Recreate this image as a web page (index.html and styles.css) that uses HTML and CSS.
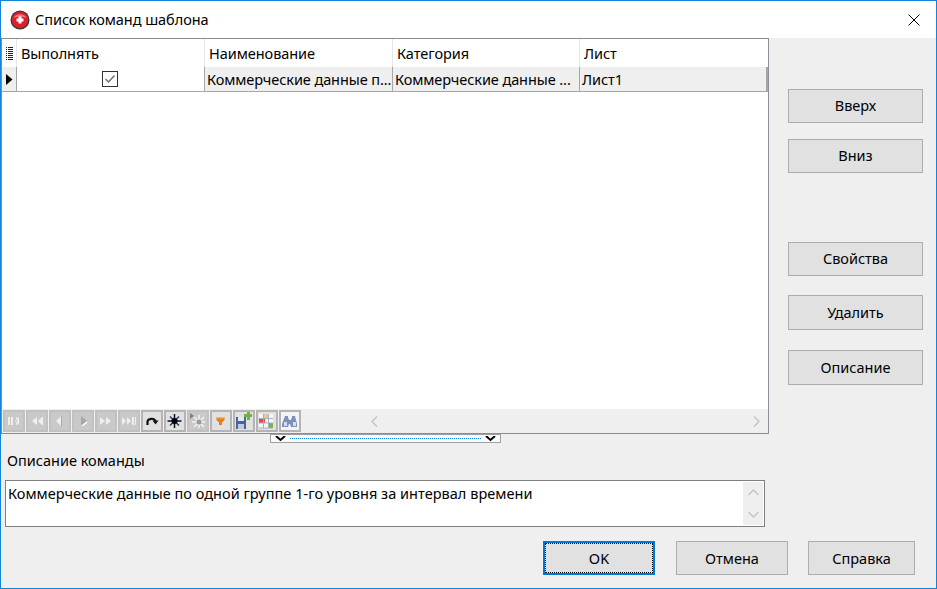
FILE: index.html
```html
<!DOCTYPE html>
<html lang="ru">
<head>
<meta charset="utf-8">
<title>Список команд шаблона</title>
<link rel="stylesheet" href="styles.css">
</head>
<body>
<div class="window">
  <header class="titlebar">
    <svg class="app-icon" width="20" height="20" viewBox="0 0 20 20"><circle cx="10" cy="10" r="9.500" fill="#3a3a3a"/><circle cx="10" cy="10" r="8.200" fill="#dd1f2b"/><path d="M3.500 8a7 6 0 0 1 13 0a9 4 0 0 0-13 0z" fill="#f0757c"/><path d="M8.500 6.500h3V8.500h2v3h-2v2h-3v-2h-2v-3h2z" fill="#fff"/></svg>
    <span class="title">Список команд шаблона</span>
    <svg class="close" width="12" height="12" viewBox="0 0 12 12"><path d="M.5.500l11 11M11.500.500l-11 11" stroke="#000" stroke-width="1" fill="none"/></svg>
  </header>
  <div class="content">
    <div class="left">
      <section class="grid">
        <div class="row head">
          <div class="cell ind">
            <svg width="9" height="16" viewBox="0 0 9 16"><path d="M1 2.500h1M3 2.500h5M1 4.500h1M3 4.500h5M1 6.500h1M3 6.500h5M1 8.500h1M3 8.500h5M1 10.500h1M3 10.500h5M1 12.500h1M3 12.500h5M1 14.500h1M3 14.500h5" stroke="#222" fill="none"/></svg>
          </div>
          <div class="cell">Выполнять</div>
          <div class="cell">Наименование</div>
          <div class="cell c3">Категория</div>
          <div class="cell c4">Лист</div>
        </div>
        <div class="row data">
          <div class="cell ind">
            <svg width="7" height="11" viewBox="0 0 7 11"><path d="M0 0l6.500 5.500L0 11z" fill="#000"/></svg>
          </div>
          <div class="cell chk">
            <svg width="16" height="16" viewBox="0 0 16 16"><rect x=".5" y=".5" width="15" height="15" fill="#fff" stroke="#333"/><path d="M3.500 8l3 3 6-6.500" fill="none" stroke="#6a6a6a" stroke-width="1.300"/></svg>
          </div>
          <div class="cell txt">Коммерческие данные п...</div>
          <div class="cell txt">Коммерческие данные ...</div>
          <div class="cell txt">Лист1</div>
        </div>
        <div class="grid-space"></div>
        <div class="nav">
          <button class="nb off"><svg width="20" height="20" viewBox="0 0 20 20"><path d="M4 6h2v8H4zM7 6h2v8H7zM15 6v8l-4-4zM13 6h-1v8h1z" fill="#efefef"/></svg></button>
          <button class="nb off"><svg width="20" height="20" viewBox="0 0 20 20"><path d="M10 6v8L5 10zM15 6v8l-4-4zM15 6h1v8h-1z" fill="#efefef"/></svg></button>
          <button class="nb off"><svg width="20" height="20" viewBox="0 0 20 20"><path d="M11 5v10l-5-5z" fill="#efefef"/><path d="M11 5h1v10h-1z" fill="#a8a8a8"/></svg></button>
          <button class="nb off"><svg width="20" height="20" viewBox="0 0 20 20"><path d="M8 5v10l6-5z" fill="#a8a8a8"/><path d="M8 15l6-5v2l-4 3z" fill="#fff"/></svg></button>
          <button class="nb off"><svg width="20" height="20" viewBox="0 0 20 20"><path d="M4 6v8l5-4zM10 6v8l5-4z" fill="#efefef"/></svg></button>
          <button class="nb off"><svg width="20" height="20" viewBox="0 0 20 20"><path d="M3 6v8l4-4zM8 6v8l4-4zM13 6h2v8h-2zM16 6h1v8h-1z" fill="#efefef"/></svg></button>
          <button class="nb"><svg width="20" height="20" viewBox="0 0 20 20"><path d="M5.500 14v-3.500C6 7.500 12 6.500 13.500 10" fill="none" stroke="#111" stroke-width="2.200"/><path d="M10.500 9.500h6l-3 4z" fill="#111"/></svg></button>
          <button class="nb"><svg width="20" height="20" viewBox="0 0 20 20"><path d="M9.500 3v14M2.500 10h14" stroke="#111" stroke-width="1.500"/><path d="M5 5.500l9 9M14 5.500l-9 9" stroke="#223a80" stroke-width="1.500"/><circle cx="9.500" cy="10" r="3" fill="#000"/></svg></button>
          <button class="nb off"><svg width="20" height="20" viewBox="0 0 20 20"><path d="M2 2l4 3-4 3z" fill="#808080"/><path d="M11 4v13M4 11h13M6 6l10 10M16 6L6 16" stroke="#f4f4f4" stroke-width="1.500"/><circle cx="11" cy="11" r="2.500" fill="#9a9a9a"/></svg></button>
          <button class="nb"><svg width="20" height="20" viewBox="0 0 20 20"><path d="M5.500 6h8v3l-2.500 2.500V14h-3v-2.500L5.500 9z" fill="#f07c10"/><path d="M5.500 6h8v1.500h-8z" fill="#ffae4a"/></svg></button>
          <button class="nb"><svg width="20" height="20" viewBox="0 0 20 20"><path d="M2 6h10v12H2z" fill="#4a6494"/><path d="M4 6h6v4H4z" fill="#e4e9f4"/><path d="M4 13h6v5H4z" fill="#bfcbe2"/><path d="M10 3h3V0.500h3V3h2v3h-2v3h-3V6h-3z" fill="#6eb04e"/></svg></button>
          <button class="nb"><svg width="20" height="20" viewBox="0 0 20 20"><path d="M2 3h14v14H2z" fill="#f6f6fa"/><path d="M6 3h5v5H6z" fill="#f6c27c"/><path d="M2 8h6v4H2z" fill="#ef4a40"/><path d="M11 12h5v5h-5z" fill="#7fb23a"/><path d="M2 17h14M2 12h14M2 7.500h14M6.500 3v14M11.500 3v14" stroke="#a3aecb" fill="none"/></svg></button>
          <button class="nb"><svg width="20" height="20" viewBox="0 0 20 20"><rect x="0" y="0" width="20" height="20" fill="#f3f3f6"/><path d="M5 5h3v2l1 1v1h2V8l1-1V5h3l2 8v3h-6l-1-3H9l-1 3H2v-3z" fill="#7d90bb"/><path d="M4 11h3v4H4zM13 11h3v4h-3z" fill="#d5dcec"/></svg></button>
          <div class="hscroll">
            <svg width="7" height="11" viewBox="0 0 7 11"><path d="M6 .500L1 5.500l5 5" fill="none" stroke="#c4c4c4" stroke-width="1.500"/></svg>
            <svg width="7" height="11" viewBox="0 0 7 11"><path d="M1 .500l5 5-5 5" fill="none" stroke="#c4c4c4" stroke-width="1.500"/></svg>
          </div>
        </div>
      </section>
      <div class="splitter">
        <svg width="11" height="6" viewBox="0 0 11 6"><path d="M1 0l4.500 4L10 0" fill="none" stroke="#000" stroke-width="2"/></svg>
        <span class="dots"></span>
        <svg width="11" height="6" viewBox="0 0 11 6"><path d="M1 0l4.500 4L10 0" fill="none" stroke="#000" stroke-width="2"/></svg>
      </div>
      <div class="label">Описание команды</div>
      <div class="desc">
        <div class="desc-text">Коммерческие данные по одной группе 1-го уровня за интервал времени</div>
        <div class="vscroll">
          <svg width="11" height="7" viewBox="0 0 11 7"><path d="M.500 6l5-5 5 5" fill="none" stroke="#c4c4c4" stroke-width="1.500"/></svg>
          <svg width="11" height="7" viewBox="0 0 11 7"><path d="M.500 1l5 5 5-5" fill="none" stroke="#c4c4c4" stroke-width="1.500"/></svg>
        </div>
      </div>
    </div>
    <aside class="side">
      <button class="btn s1">Вверх</button>
      <button class="btn s2">Вниз</button>
      <button class="btn s3">Свойства</button>
      <button class="btn s4">Удалить</button>
      <button class="btn s5">Описание</button>
    </aside>
  </div>
  <footer class="footer">
    <button class="btn ok"><span class="ok-inner">OK</span></button>
    <button class="btn cancel">Отмена</button>
    <button class="btn help">Справка</button>
  </footer>
</div>
</body>
</html>
```

FILE: styles.css
```css
* { box-sizing: border-box; }
html, body { margin: 0; padding: 0; }
body {
  width: 937px;
  height: 589px;
  overflow: hidden;
  font-family: "Noto Sans", "Open Sans", sans-serif;
  font-size: 14.5px;
  color: #000;
}
button { font: inherit; color: inherit; padding: 0; margin: 0; }
.window {
  width: 937px;
  height: 589px;
  border: 1px solid #1583d7;
  background: #efefef;
  display: flex;
  flex-direction: column;
}
.titlebar {
  height: 37px;
  flex: none;
  background: #fff;
  display: flex;
  align-items: center;
  padding: 0 16px 0 9px;
}
.app-icon { flex: none; margin-right: 5px; }
.title { flex: 1; padding-bottom: 2px; letter-spacing: -0.05px; }
.close { flex: none; }
.content { display: flex; flex: none; height: 503px; }
.left { width: 768px; flex: none; }
.grid {
  height: 396px;
  border: 1px solid #8c8c8c;
  border-right-color: #8c8f96;
  background: #fff;
  display: flex;
  flex-direction: column;
}
.row { display: grid; grid-template-columns: 15px 188px 188px 187px 1fr; flex: none; }
.cell {
  border-right: 1px solid #e6e6e6;
  white-space: nowrap;
  overflow: hidden;
  display: flex;
  align-items: center;
}
.cell:last-child { border-right: 0; }
.head { height: 28px; background: #fff; }
.head .cell { padding-left: 4px; letter-spacing: -0.05px; }
.head .ind { padding-left: 3px; }
.data {
  height: 25px;
  border-bottom: 1px solid #a6a6a6;
  background: #efefef;
}
.data .cell { border-right-color: #a6a6a6; }
.data .cell:last-child { border-right: 2px solid #a6a6a6; }
.data .ind { padding-left: 4px; }
.chk { justify-content: center; background: #fff; padding-right: 2px; }
.txt { padding-left: 2px; letter-spacing: -0.08px; }
.grid-space { flex: 1; }
.nav {
  height: 24px;
  flex: none;
  background: #efefef;
  padding: 1px;
  display: flex;
  gap: 1px;
}
.nb {
  width: 22px;
  height: 22px;
  border: 2px solid #b4b4b4;
  background: #e1e1e1;
  display: flex;
  align-items: center;
  justify-content: center;
  overflow: hidden;
  flex: none;
}
.nb svg { flex: none; }
.nb.off { background: #c9c9c9; border-color: #c1c1c1; }
.hscroll {
  flex: 1;
  display: flex;
  align-items: center;
  justify-content: space-between;
  padding: 0 7px 0 69px;
}
.splitter {
  width: 231px;
  height: 9px;
  margin-left: 269px;
  border: 1px solid #a0a0a0;
  background: #fafafa;
  display: flex;
  align-items: center;
  padding: 0 4px;
  gap: 4px;
}
.dots { flex: 1; height: 1px; border-top: 1px dotted #0a84e0; }
.label { margin: 8px 0 0 6px; height: 29px; line-height: 18px; }
.desc {
  width: 760px;
  height: 47px;
  margin-left: 4px;
  border: 1px solid #808080;
  background: #fff;
  display: flex;
  padding: 1px;
}
.desc-text { flex: 1; padding: 1px 0 0 1px; line-height: 20px; letter-spacing: 0.03px; }
.vscroll {
  width: 20px;
  flex: none;
  background: #efefef;
  display: flex;
  flex-direction: column;
  align-items: center;
  justify-content: space-between;
  padding: 7px 0;
}
.btn {
  display: flex;
  align-items: center;
  justify-content: center;
  background: #e1e1e1;
  border: 1px solid #adadad;
  height: 34px;
}
.side { margin-left: 19px; width: 135px; display: flex; flex-direction: column; }
.side .btn { width: 135px; flex: none; padding-bottom: 2px; }
.s1 { margin-top: 51px; }
.s2 { margin-top: 16px; }
.s3 { margin-top: 69px; }
.s4 { margin-top: 19px; height: 35px; }
.s5 { margin-top: 20px; height: 35px; }
.footer { display: flex; padding-left: 542px; }
.ok { width: 112px; border: 2px solid #0078d7; }
.ok-inner {
  flex: 1;
  align-self: stretch;
  display: flex;
  align-items: center;
  justify-content: center;
  border: 1px dotted #000;
}
.cancel { width: 112px; margin-left: 21px; }
.help { width: 107px; margin-left: 20px; }
```
